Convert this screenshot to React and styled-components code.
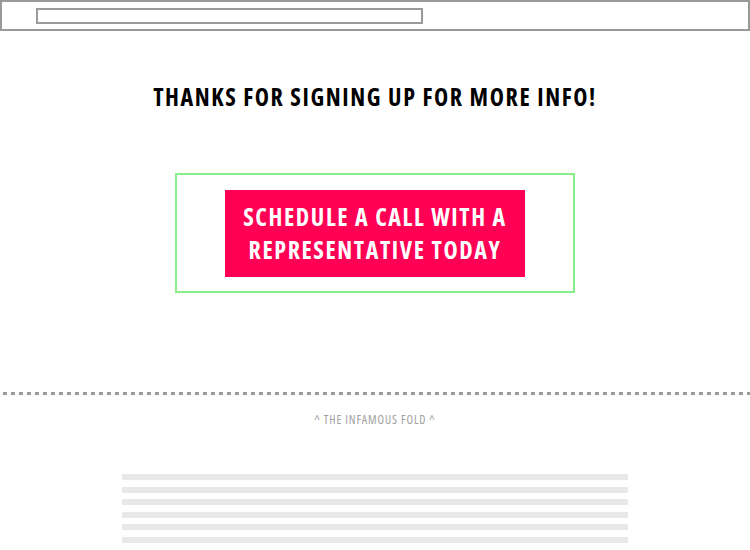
import React from 'react'
import styled, { createGlobalStyle } from 'styled-components';

const GlobalStyle = createGlobalStyle`
  html, body {
    margin: 0;
    padding: 0;
    background: #fff;
  }
  body {
    font-family: "Open Sans", "DejaVu Sans Condensed", sans-serif;
    font-stretch: 75%;
  }
`;

const Page = styled.div`
  width: 750px;
  height: 550px;
  overflow: hidden;
  display: flex;
  flex-direction: column;
`;

const TopBar = styled.div`
  box-sizing: border-box;
  height: 31px;
  border: 2px solid #999;
  padding: 6px 0 0 34px;
`;

const UrlField = styled.div`
  box-sizing: border-box;
  width: 387px;
  height: 16px;
  border: 2px solid #999;
`;

const Title = styled.h1`
  margin: 51px 0 0;
  font-size: 24px;
  line-height: 30px;
  font-weight: 700;
  letter-spacing: 1.6px;
  text-align: center;
  color: #000;
`;

const CtaFrame = styled.div`
  box-sizing: border-box;
  align-self: center;
  width: 400px;
  height: 120px;
  margin-top: 61px;
  border: 2px solid #88ee88;
  display: flex;
  justify-content: center;
  align-items: center;
`;

const CtaButton = styled.div`
  width: 300px;
  height: 87px;
  background: #ff0055;
  color: #fff;
  font-size: 24px;
  line-height: 33px;
  font-weight: 700;
  letter-spacing: 1.6px;
  text-align: center;
  display: flex;
  align-items: center;
  justify-content: center;
`;

const Fold = styled.div`
  height: 3px;
  margin-top: 99px;
  background: repeating-linear-gradient(to right, transparent 0 3px, #999 3px 7px, transparent 7px 8px);
  background-size: 8px 3px;
`;

const FoldLabel = styled.div`
  margin-top: 18px;
  font-size: 12px;
  line-height: 14px;
  letter-spacing: 0.9px;
  color: #a0a0a0;
  text-align: center;
`;

const Lines = styled.div`
  align-self: center;
  width: 506px;
  margin: 47px 0 0 0;
  display: flex;
  flex-direction: column;
  gap: 6.6px;
`;

const Line = styled.div`
  height: 6px;
  background: #e8e8e8;
`;

const App = () => {
  return (
    <Page>
      <GlobalStyle />
      <TopBar>
        <UrlField />
      </TopBar>
      <Title>THANKS FOR SIGNING UP FOR MORE INFO!</Title>
      <CtaFrame>
        <CtaButton>SCHEDULE A CALL WITH A<br />REPRESENTATIVE TODAY</CtaButton>
      </CtaFrame>
      <Fold />
      <FoldLabel>^ THE INFAMOUS FOLD ^</FoldLabel>
      <Lines>
        {[0, 1, 2, 3, 4, 5].map((i) => (
          <Line key={i} />
        ))}
      </Lines>
    </Page>
  )
}

export default App
